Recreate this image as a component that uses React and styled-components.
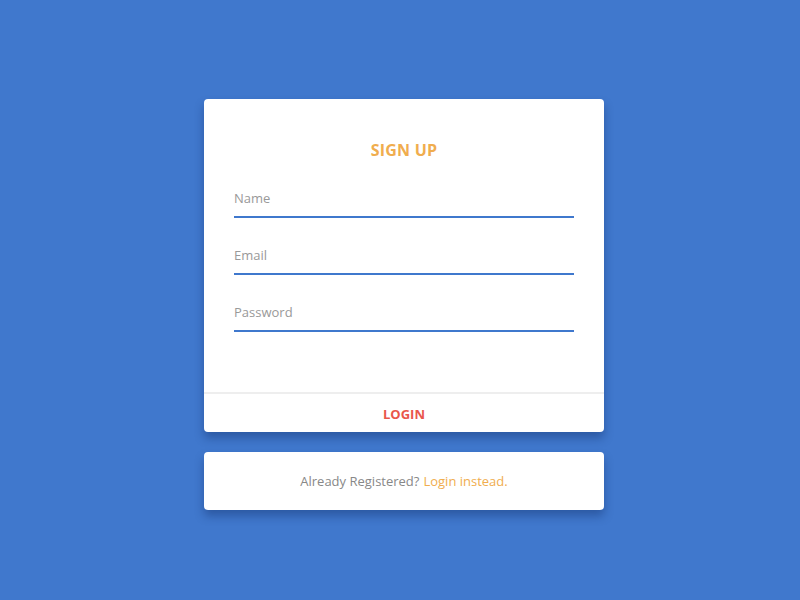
import React from "react";
import styled, { createGlobalStyle } from "styled-components";

const Global = createGlobalStyle`
  html, body { margin: 0; padding: 0; }
  body {
    background: #4078cd;
    font-family: "Open Sans", "Liberation Sans", sans-serif;
    -webkit-font-smoothing: antialiased;
  }
`;

const Page = styled.div`
  width: 800px;
  height: 600px;
  display: flex;
  flex-direction: column;
  align-items: center;
  padding: 99px 0 0 8px;
  box-sizing: border-box;
  gap: 20px;
`;

const Card = styled.div`
  width: 400px;
  background: #fff;
  border-radius: 4px;
  box-shadow: 0 6px 10px rgba(20, 50, 110, 0.45);
  overflow: hidden;
`;

const Body = styled.div`
  padding: 40px 30px 60px;
  display: flex;
  flex-direction: column;
  gap: 25px;
`;

const Title = styled.h1`
  margin: 0;
  text-align: center;
  color: #f0ad4e;
  font-size: 16px;
  line-height: 22px;
  font-weight: 700;
  letter-spacing: 0.2px;
`;

const Input = styled.input`
  display: block;
  width: 100%;
  box-sizing: border-box;
  height: 32px;
  border: none;
  border-bottom: 2px solid #3f78cd;
  outline: none;
  padding: 0 0 6px;
  font-family: inherit;
  font-size: 13px;
  color: #555;
  background: transparent;
  &::placeholder { color: #999; }
`;

const Footer = styled.div`
  border-top: 2px solid #eeeeee;
  height: 38px;
  padding-top: 2px;
  box-sizing: border-box;
  height: 40px;
  display: flex;
  align-items: center;
  justify-content: center;
`;

const LoginButton = styled.button`
  border: none;
  background: none;
  color: #e9574b;
  font-family: inherit;
  font-weight: 700;
  font-size: 13px;
  cursor: pointer;
  padding: 0;
`;

const SmallCard = styled(Card)`
  height: 58px;
  display: flex;
  align-items: center;
  justify-content: center;
  font-size: 13px;
  color: #888;
`;

const Link = styled.a`
  color: #f0ad4e;
  text-decoration: none;
  margin-left: 4px;
`;

export default function App() {
  return (
    <>
      <Global />
      <Page>
        <Card>
          <Body>
            <Title>SIGN UP</Title>
            <Input placeholder="Name" />
            <Input placeholder="Email" />
            <Input placeholder="Password" type="password" />
          </Body>
          <Footer>
            <LoginButton>LOGIN</LoginButton>
          </Footer>
        </Card>
        <SmallCard>
          Already Registered?<Link href="#">Login instead.</Link>
        </SmallCard>
      </Page>
    </>
  );
}
